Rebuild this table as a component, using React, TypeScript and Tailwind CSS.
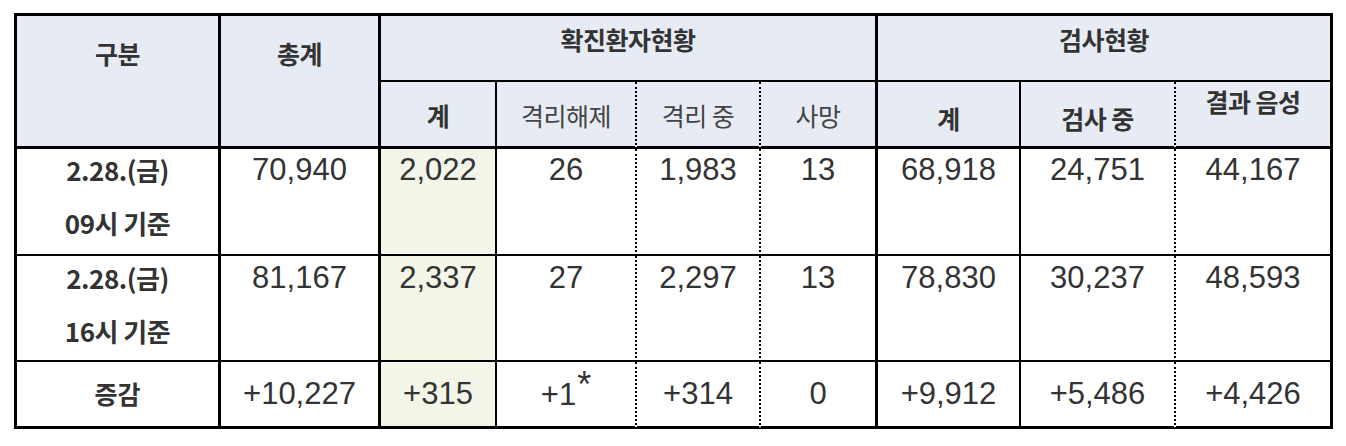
import React from "react";

const kr = "font-['Noto_Sans_CJK_KR',sans-serif]";
const num = "font-['Liberation_Sans','Noto_Sans_CJK_KR',sans-serif]";

// right border per column
const rb = [
  "border-r-[3px]",
  "border-r-[3px]",
  "border-r-2",
  "border-r-2 [border-right-style:dotted]",
  "border-r-2 [border-right-style:dotted]",
  "border-r-[3px]",
  "border-r-2",
  "border-r-2 [border-right-style:dotted]",
  "border-r-[3px]",
];

type Row = {
  date: string;
  time: string;
  vals: React.ReactNode[];
  bottom: string;
  pad: string;
};

const rows: Row[] = [
  {
    date: "2.28.(금)",
    time: "09시 기준",
    vals: ["70,940", "2,022", "26", "1,983", "13", "68,918", "24,751", "44,167"],
    bottom: "border-b-2",
    pad: "pt-[2px]",
  },
  {
    date: "2.28.(금)",
    time: "16시 기준",
    vals: ["81,167", "2,337", "27", "2,297", "13", "78,830", "30,237", "48,593"],
    bottom: "border-b-2",
    pad: "pt-[3px]",
  },
];

const last = [
  "+10,227",
  "+315",
  <>
    +1
    <span className="relative -top-[8px] ml-[1px] text-[36px]">*</span>
  </>,
  "+314",
  "0",
  "+9,912",
  "+5,486",
  "+4,426",
];

function HeadTop({ label }: { label: string }) {
  return (
    <div
      className={`row-span-2 border-b-[3px] border-r-[3px] border-black bg-[#e7ecf4] pt-[21px] text-center text-[25px] font-bold leading-[32px] tracking-[-0.5px] text-[#333] ${kr}`}
    >
      {label}
    </div>
  );
}

function Sub({
  label,
  col,
  bold,
  pad,
}: {
  label: string;
  col: number;
  bold?: boolean;
  pad: string;
}) {
  return (
    <div
      className={`border-b-[3px] border-black bg-[#e7ecf4] text-center text-[25px] leading-[32px] tracking-[-0.5px] ${rb[col]} ${pad} ${
        bold ? "font-bold text-[#333]" : "font-normal text-[#444]"
      } ${kr}`}
    >
      {label}
    </div>
  );
}

export default function App() {
  return (
    <div className="min-h-screen bg-white pl-[14px] pt-[13px]">
      <div className="grid w-fit grid-cols-[204px_160px_116px_140px_124px_117px_143px_155px_157px] grid-rows-[66px_67px_107px_106px_67px] border-l-[3px] border-t-[3px] border-black">
        <HeadTop label="구분" />
        <HeadTop label="총계" />
        <div
          className={`col-span-4 border-b-2 border-r-[3px] border-black bg-[#e7ecf4] pt-[7px] text-center text-[25px] font-bold leading-[32px] tracking-[-0.5px] text-[#333] ${kr}`}
        >
          확진환자현황
        </div>
        <div
          className={`col-span-3 border-b-2 border-r-[3px] border-black bg-[#e7ecf4] pt-[7px] text-center text-[25px] font-bold leading-[32px] tracking-[-0.5px] text-[#333] ${kr}`}
        >
          검사현황
        </div>

        <Sub label="계" col={2} bold pad="pt-[17px]" />
        <Sub label="격리해제" col={3} pad="pt-[17px]" />
        <Sub label="격리 중" col={4} pad="pt-[17px]" />
        <Sub label="사망" col={5} pad="pt-[17px]" />
        <Sub label="계" col={6} bold pad="pt-[20px]" />
        <Sub label="검사 중" col={7} bold pad="pt-[20px]" />
        <Sub label="결과 음성" col={8} bold pad="pt-[3px]" />

        {rows.map((r, i) => (
          <React.Fragment key={i}>
            <div
              className={`border-black text-center text-[26px] font-bold leading-[38px] tracking-[-0.5px] text-[#333] ${rb[0]} ${r.bottom} ${r.pad} ${kr}`}
            >
              <div>{r.date}</div>
              <div className="mt-[15px]">{r.time}</div>
            </div>
            {r.vals.map((v, j) => (
              <div
                key={j}
                className={`border-black text-center text-[31px] leading-[38px] text-[#333] ${rb[j + 1]} ${r.bottom} ${r.pad} ${
                  j === 1 ? "bg-[#f2f5e8]" : ""
                } ${num}`}
              >
                {v}
              </div>
            ))}
          </React.Fragment>
        ))}

        <div
          className={`flex items-center justify-center border-b-[3px] border-black text-[25px] font-bold text-[#333] ${rb[0]} ${kr}`}
        >
          증감
        </div>
        {last.map((v, j) => (
          <div
            key={j}
            className={`flex items-center justify-center border-b-[3px] border-black text-[31px] leading-[38px] text-[#333] ${rb[j + 1]} ${
              j === 1 ? "bg-[#f2f5e8]" : ""
            } ${num}`}
          >
            <span>{v}</span>
          </div>
        ))}
      </div>
    </div>
  );
}
